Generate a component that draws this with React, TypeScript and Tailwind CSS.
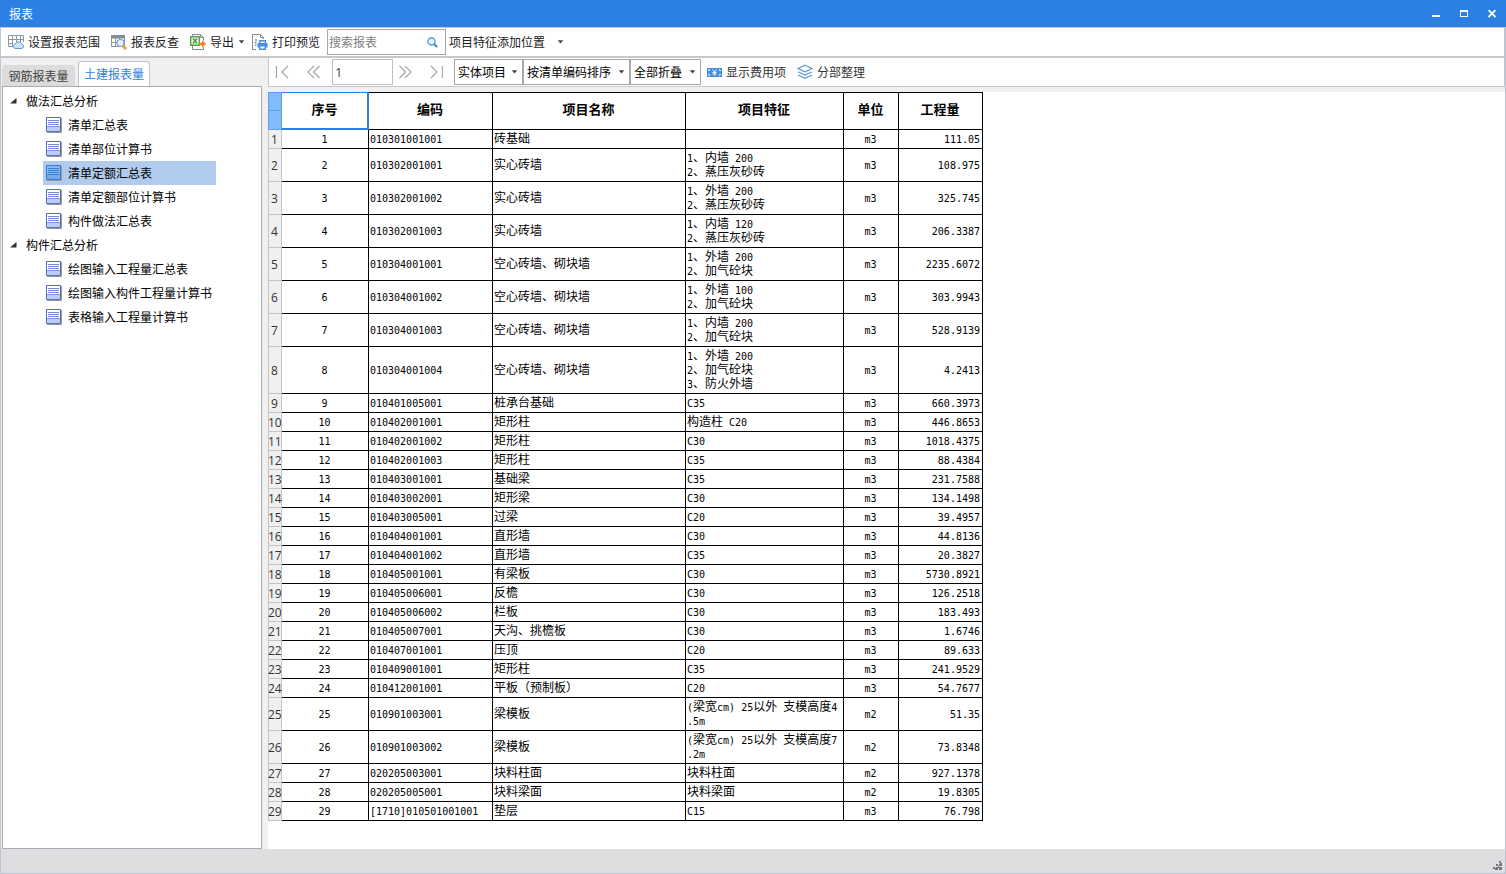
import { useState } from "react";
import { clsx } from "clsx";

interface Row {
  code: string;
  name: string;
  feature?: string;
  unit: string;
  qty: string;
}

const rows: Row[] = [
  { code: "010301001001", name: "砖基础", unit: "m3", qty: "111.05" },
  { code: "010302001001", name: "实心砖墙", feature: "1、内墙 200\n2、蒸压灰砂砖", unit: "m3", qty: "108.975" },
  { code: "010302001002", name: "实心砖墙", feature: "1、外墙 200\n2、蒸压灰砂砖", unit: "m3", qty: "325.745" },
  { code: "010302001003", name: "实心砖墙", feature: "1、内墙 120\n2、蒸压灰砂砖", unit: "m3", qty: "206.3387" },
  { code: "010304001001", name: "空心砖墙、砌块墙", feature: "1、外墙 200\n2、加气砼块", unit: "m3", qty: "2235.6072" },
  { code: "010304001002", name: "空心砖墙、砌块墙", feature: "1、外墙 100\n2、加气砼块", unit: "m3", qty: "303.9943" },
  { code: "010304001003", name: "空心砖墙、砌块墙", feature: "1、内墙 200\n2、加气砼块", unit: "m3", qty: "528.9139" },
  { code: "010304001004", name: "空心砖墙、砌块墙", feature: "1、外墙 200\n2、加气砼块\n3、防火外墙", unit: "m3", qty: "4.2413" },
  { code: "010401005001", name: "桩承台基础", feature: "C35", unit: "m3", qty: "660.3973" },
  { code: "010402001001", name: "矩形柱", feature: "构造柱 C20", unit: "m3", qty: "446.8653" },
  { code: "010402001002", name: "矩形柱", feature: "C30", unit: "m3", qty: "1018.4375" },
  { code: "010402001003", name: "矩形柱", feature: "C35", unit: "m3", qty: "88.4384" },
  { code: "010403001001", name: "基础梁", feature: "C35", unit: "m3", qty: "231.7588" },
  { code: "010403002001", name: "矩形梁", feature: "C30", unit: "m3", qty: "134.1498" },
  { code: "010403005001", name: "过梁", feature: "C20", unit: "m3", qty: "39.4957" },
  { code: "010404001001", name: "直形墙", feature: "C30", unit: "m3", qty: "44.8136" },
  { code: "010404001002", name: "直形墙", feature: "C35", unit: "m3", qty: "20.3827" },
  { code: "010405001001", name: "有梁板", feature: "C30", unit: "m3", qty: "5730.8921" },
  { code: "010405006001", name: "反檐", feature: "C30", unit: "m3", qty: "126.2518" },
  { code: "010405006002", name: "栏板", feature: "C30", unit: "m3", qty: "183.493" },
  { code: "010405007001", name: "天沟、挑檐板", feature: "C30", unit: "m3", qty: "1.6746" },
  { code: "010407001001", name: "压顶", feature: "C20", unit: "m3", qty: "89.633" },
  { code: "010409001001", name: "矩形柱", feature: "C35", unit: "m3", qty: "241.9529" },
  { code: "010412001001", name: "平板（预制板）", feature: "C20", unit: "m3", qty: "54.7677" },
  { code: "010901003001", name: "梁模板", feature: "(梁宽cm) 25以外 支模高度4\n.5m", unit: "m2", qty: "51.35" },
  { code: "010901003002", name: "梁模板", feature: "(梁宽cm) 25以外 支模高度7\n.2m", unit: "m2", qty: "73.8348" },
  { code: "020205003001", name: "块料柱面", feature: "块料柱面", unit: "m2", qty: "927.1378" },
  { code: "020205005001", name: "块料梁面", feature: "块料梁面", unit: "m2", qty: "19.8305" },
  { code: "[1710]010501001001", name: "垫层", feature: "C15", unit: "m3", qty: "76.798" },
];

const tree = [
  {
    title: "做法汇总分析",
    items: ["清单汇总表", "清单部位计算书", "清单定额汇总表", "清单定额部位计算书", "构件做法汇总表"],
  },
  {
    title: "构件汇总分析",
    items: ["绘图输入工程量汇总表", "绘图输入构件工程量计算书", "表格输入工程量计算书"],
  },
];

function Caret() {
  return (
    <svg width="7" height="4" viewBox="0 0 7 4" className="shrink-0">
      <path d="M0.700 0.300h5.600L3.500 3.500z" fill="#444" />
    </svg>
  );
}

function RangeIcon() {
  return (
    <svg width="16" height="16" viewBox="0 0 16 16" fill="none">
      <path d="M0.500 1.500h15v11H.5zM0.500 5.500h15M0.500 9.500h15M4.500 1.500v11M8.500 1.500v11M12.500 1.500v11" stroke="#8a98a2" />
      <path d="M5 8h11v8H5z" fill="#fff" />
      <path d="M7.500 14.500a2.200 2.200 0 0 1-.6-4.300 4 4 0 0 1 7.200 0 2.200 2.200 0 0 1-.6 4.300z" fill="#cfe3fa" stroke="#5a9ae0" />
    </svg>
  );
}

function LookupIcon() {
  return (
    <svg width="16" height="16" viewBox="0 0 16 16" fill="none">
      <path d="M0.500 1.500h13v11H.5zM0.500 8.500h13M4.500 1.500v11M8.500 1.500v11" stroke="#8a98a2" />
      <path d="M0 1h14v3.500H0z" fill="#7f8f99" />
      <circle cx="9.500" cy="9" r="3.500" fill="#e6effb" stroke="#7d9fd4" strokeWidth="1.200" />
      <path d="M12 12l3 3" stroke="#f59a1b" strokeWidth="2.800" />
    </svg>
  );
}

function ExportIcon() {
  return (
    <svg width="16" height="16" viewBox="0 0 16 16" fill="none">
      <path d="M2.500 2V.5h8l3 3v3M2.500 12v3.500h11V13M10.500.5v3h3" stroke="#7f8f99" />
      <path d="M0.700 2.700h8.600v8.600H.7z" fill="#e9f6e4" stroke="#5aa548" strokeWidth="1.400" />
      <path d="M3 4.500l4 5M7 4.500l-4 5" stroke="#4d9b3c" strokeWidth="1.500" />
      <path d="M9.500 8.800H12V6.300l4 3.700-4 3.700v-2.500H9.500z" fill="#f5792a" />
    </svg>
  );
}

function PrintIcon() {
  return (
    <svg width="16" height="16" viewBox="0 0 16 16" fill="none">
      <path d="M4 15.500H.5V.5h8l3 3V5M8.500.5v3h3" stroke="#7f8f99" />
      <path d="M3 6h2M2.500 8.500h2M3 11h1.500" stroke="#7f8f99" strokeWidth="1.500" />
      <path d="M7.700 9V6.700h5.600V9" fill="#fff" stroke="#4a90e2" strokeWidth="1.400" />
      <path d="M5.500 9h10v4.500h-10z" fill="#4a90e2" />
      <path d="M7.700 11.700h5.600v3.600H7.700z" fill="#fff" stroke="#4a90e2" strokeWidth="1.400" />
    </svg>
  );
}

function MoneyIcon() {
  return (
    <svg width="15" height="9" viewBox="0 0 15 9" fill="none">
      <path d="M0 0h15v9H0z" fill="#4a90e2" />
      <path d="M1 2.500h1.500V1M12.500 1v1.500H14M1 6.500h1.500V8M12.500 8V6.500H14" stroke="#fff" strokeWidth="0.800" />
      <path d="M5.500 1.500l2 2.500 2-2.500M7.500 4v3.500M5.500 4.500h4M5.500 6h4" stroke="#fff" strokeWidth="0.900" />
    </svg>
  );
}

function LayersIcon() {
  return (
    <svg width="16" height="16" viewBox="0 0 16 16" fill="none" stroke="#5a9ae0" strokeWidth="1.200">
      <path d="M8 1.200l7 3.300-7 3.300-7-3.300z" />
      <path d="M1 7.700l7 3.300 7-3.300M1 11l7 3.300 7-3.300" />
    </svg>
  );
}

function SheetIcon({ active }: { active?: boolean }) {
  return (
    <svg width="16" height="16" viewBox="0 0 16 16" fill="none" className="shrink-0">
      <path d="M1 15.500h14.500V1" stroke="#9a9a9a" />
      <path d="M0.500.5h14v14H.5z" fill={active ? "#86baf3" : "#fff"} stroke={active ? "#3b7bd0" : "#5070bd"} />
      <path d="M1 10h13v4H1z" fill={active ? "#6fabee" : "#bccbf8"} />
      <path d="M2 3.500h11M2 5.500h11M2 7.500h11" stroke={active ? "#3b7bd0" : "#6f8cd6"} />
      <path d="M1 9.500h13" stroke={active ? "#3b7bd0" : "#7f97da"} />
    </svg>
  );
}

function NavIcon({ d }: { d: string }) {
  return (
    <svg width="14" height="14" viewBox="0 0 14 14" fill="none" stroke="#a6a6a6" strokeWidth="1.200">
      <path d={d} />
    </svg>
  );
}

function ToolButton({ icon, label }: { icon: React.ReactNode; label: string }) {
  return (
    <button className="flex items-center gap-1 px-1 h-6 rounded-sm shrink-0 hover:bg-blue-50">
      {icon}
      {label}
    </button>
  );
}

function Combo({ label, options, width }: { label: string; options: string[]; width: string }) {
  return (
    <div className={clsx("relative shrink-0", width)}>
      <select
        aria-label={label}
        className="appearance-none w-full h-[26px] pl-[3px] border border-[#a8a8a8] bg-white text-xs text-black outline-none"
      >
        {options.map((o) => (
          <option key={o}>{o}</option>
        ))}
      </select>
      <span className="absolute right-[5px] top-0 h-full flex items-center pointer-events-none">
        <Caret />
      </span>
    </div>
  );
}

// half-width characters take half of a full-width one
function Mixed({ text }: { text: string }) {
  return text.split(/([\x21-\x7e ]+)/).map((part, i) =>
    i % 2 ? (
      <span key={i} className="font-['DejaVu_Sans_Mono',monospace] text-[10px] leading-none">
        {part}
      </span>
    ) : (
      part
    )
  );
}

function TitleBar() {
  return (
    <header className="h-7 shrink-0 flex items-center justify-between pl-[9px] pr-1 bg-[#2d80e3] border-b border-[#bfc7d3] text-white">
      <h1>报表</h1>
      <div className="flex items-center gap-2">
        <button aria-label="最小化" className="w-5 h-6 flex items-center justify-center">
          <svg width="8" height="8" viewBox="0 0 8 8"><path d="M0 5h8v2H0z" fill="#fff" /></svg>
        </button>
        <button aria-label="最大化" className="w-5 h-6 flex items-center justify-center">
          <svg width="8" height="8" viewBox="0 0 8 8"><path d="M0 0h8v7H0zM1 2v4h6V2z" fill="#fff" fillRule="evenodd" /></svg>
        </button>
        <button aria-label="关闭" className="w-5 h-6 flex items-center justify-center">
          <svg width="8" height="8" viewBox="0 0 8 8"><path d="M0.500 0l7 7M7.500 0l-7 7" stroke="#fff" strokeWidth="1.800" /></svg>
        </button>
      </div>
    </header>
  );
}

function MainToolbar() {
  return (
    <div className="h-[30px] shrink-0 flex items-center gap-[3px] pl-[3px] bg-white border-b-2 border-r border-[#c4c8cd] text-[#222]">
      <ToolButton icon={<RangeIcon />} label="设置报表范围" />
      <ToolButton icon={<LookupIcon />} label="报表反查" />
      <button className="flex items-center gap-1 pl-1 h-6 shrink-0">
        <ExportIcon />
        导出
        <Caret />
      </button>
      <ToolButton icon={<PrintIcon />} label="打印预览" />
      <label className="w-[119px] h-[26px] shrink-0 flex items-center border border-[#a8a8a8] pl-px pr-[7px]">
        <input
          aria-label="搜索报表"
          placeholder="搜索报表"
          className="min-w-0 flex-1 text-xs outline-none placeholder:text-[#808080]"
        />
        <svg width="11" height="11" viewBox="0 0 11 11" fill="none">
          <circle cx="4.500" cy="4.500" r="3.600" fill="#e8f4fb" stroke="#5fadd8" strokeWidth="1.600" />
          <path d="M7.200 7.200l3 3" stroke="#2f7fc0" strokeWidth="1.800" />
        </svg>
      </label>
      <button className="flex items-center gap-3 h-6 shrink-0">
        项目特征添加位置
        <Caret />
      </button>
    </div>
  );
}

function Sidebar() {
  const [selected, setSelected] = useState("清单定额汇总表");

  return (
    <aside className="w-[261px] shrink-0 flex flex-col pl-px">
      <div className="h-7 shrink-0 flex items-end gap-[3px]" role="tablist">
        <button role="tab" aria-selected="false" className="h-[21px] w-[73px] flex items-center justify-center rounded-t-sm bg-[#dcdcdc] text-[#444]">
          钢筋报表量
        </button>
        <button role="tab" aria-selected="true" className="h-[25px] w-[72px] flex items-center justify-center rounded-t border border-b-0 border-[#c0c4ca] bg-white text-[#2d80e3]">
          土建报表量
        </button>
      </div>
      <nav className="flex-1 bg-white border border-[#a9abb0] pt-0.5 text-black">
        {tree.map((group) => (
          <section key={group.title}>
            <h2 className="h-6 flex items-center gap-2 pl-[7px]">
              <svg width="8" height="8" viewBox="0 0 8 8"><path d="M6.500 1v5.500H0z" fill="#333" /></svg>
              {group.title}
            </h2>
            <ul className="ml-10">
              {group.items.map((item) => (
                <li key={item}>
                  <button
                    onClick={() => setSelected(item)}
                    className={clsx(
                      "h-6 w-[173px] flex items-center gap-1.5 pl-[3px] whitespace-nowrap",
                      selected === item && "bg-[#b1cbec]"
                    )}
                  >
                    <SheetIcon active={selected === item} />
                    {item}
                  </button>
                </li>
              ))}
            </ul>
          </section>
        ))}
      </nav>
    </aside>
  );
}

function ReportToolbar() {
  return (
    <div className="h-[29px] shrink-0 flex items-center bg-white border-l border-b border-r border-[#c4c8cd] pl-1.5 text-[#333]">
      <div className="flex items-center gap-[18px] shrink-0">
        <button aria-label="首页"><NavIcon d="M1.500 1v12M13 1L7 7l6 6" /></button>
        <button aria-label="上一页"><NavIcon d="M7 1L1 7l6 6M12.500 1l-6 6 6 6" /></button>
      </div>
      <input
        aria-label="页码"
        defaultValue="1"
        className="w-[61px] h-[26px] shrink-0 ml-[11px] pl-[2px] border border-[#c0c0c0] font-['Open_Sans',sans-serif] text-[13px] text-[#444] outline-none"
      />
      <div className="flex items-center gap-[18px] shrink-0 ml-[5px]">
        <button aria-label="下一页"><NavIcon d="M1.500 1l6 6-6 6M7 1l6 6-6 6" /></button>
        <button aria-label="末页"><NavIcon d="M1 1l6 6-6 6M12.500 1v12" /></button>
      </div>
      <div className="flex shrink-0 ml-2.5">
        <Combo label="项目类型" options={["实体项目", "措施项目"]} width="w-[69px]" />
        <Combo label="排序" options={["按清单编码排序"]} width="w-[107px]" />
        <Combo label="折叠" options={["全部折叠", "全部展开"]} width="w-[71px]" />
      </div>
      <div className="flex items-center gap-[3px] ml-0.5">
        <ToolButton icon={<MoneyIcon />} label="显示费用项" />
        <ToolButton icon={<LayersIcon />} label="分部整理" />
      </div>
    </div>
  );
}

const headCell = "border-t border-r border-b border-black text-[13px] leading-4 font-bold pt-0 pb-[5px] pr-px";
const cell = "border-r border-b border-black leading-[14px] pt-px pb-[3px] pl-px pr-0.5";

function ReportTable() {
  return (
    <table className="w-[715px] table-fixed border-separate border-spacing-0 text-black">
      <thead>
        <tr className="h-[38px]">
          <th className="w-3.5 p-0 border border-[#5f9fe8] bg-[#80bbfa]">
            <div className="h-[18px] border-b border-[#5f9fe8]" />
            <div className="h-[18px]" />
          </th>
          <th className="w-[87px] border-t border-r-2 border-b-2 border-[#2d80e3] text-[13px] leading-4 font-bold pt-0 pb-1">序号</th>
          <th className={clsx(headCell, "w-[124px]")}>编码</th>
          <th className={clsx(headCell, "w-[193px]")}>项目名称</th>
          <th className={clsx(headCell, "w-[158px]")}>项目特征</th>
          <th className={clsx(headCell, "w-[55px]")}>单位</th>
          <th className={clsx(headCell, "w-[84px]")}>工程量</th>
        </tr>
      </thead>
      <tbody>
        {rows.map((row, i) => (
          <tr key={row.code}>
            <th
              scope="row"
              className="p-0 pt-0.5 border-r border-b border-[#c4c4c4] bg-[#f0f0f0] shadow-[inset_1px_0_#c4c4c4] font-normal font-['Open_Sans',sans-serif] text-xs leading-[14px] text-[#333]"
            >
              {i + 1}
            </th>
            <td className={clsx(cell, "text-center")}><Mixed text={String(i + 1)} /></td>
            <td className={cell}><Mixed text={row.code} /></td>
            <td className={cell}>{row.name}</td>
            <td className={clsx(cell, "whitespace-pre")}><Mixed text={row.feature ?? ""} /></td>
            <td className={clsx(cell, "text-center")}><Mixed text={row.unit} /></td>
            <td className={clsx(cell, "text-right")}><Mixed text={row.qty} /></td>
          </tr>
        ))}
      </tbody>
    </table>
  );
}

export default function App() {
  return (
    <div className="min-h-screen flex flex-col bg-[#f0f0f0] font-['Noto_Sans_CJK_SC',sans-serif] text-xs">
      <TitleBar />
      <div className="flex-1 flex flex-col border-x border-b border-[#bcc5d3]">
        <MainToolbar />
        <div className="flex-1 flex">
          <Sidebar />
          <main className="flex-1 min-w-0 flex flex-col pl-1.5">
            <ReportToolbar />
            <div className="flex-1 mt-[5px] bg-white">
              <ReportTable />
            </div>
          </main>
        </div>
        <footer className="h-6 shrink-0 flex items-end justify-end pr-[3px] pb-[3px] bg-[#dedee0]">
          <svg width="9" height="9" viewBox="0 0 9 9" fill="#70757b">
            <path d="M6 0h2v2H6zM3 3h2v2H3zM6 3h3v2H6zM0 6h2v2H0zM3 6h2v3H3zM6 6h3v3H6zM2 7h1v2H2zM5 5h1v2H5zM7 2h2v1H7z" />
          </svg>
        </footer>
      </div>
    </div>
  );
}
